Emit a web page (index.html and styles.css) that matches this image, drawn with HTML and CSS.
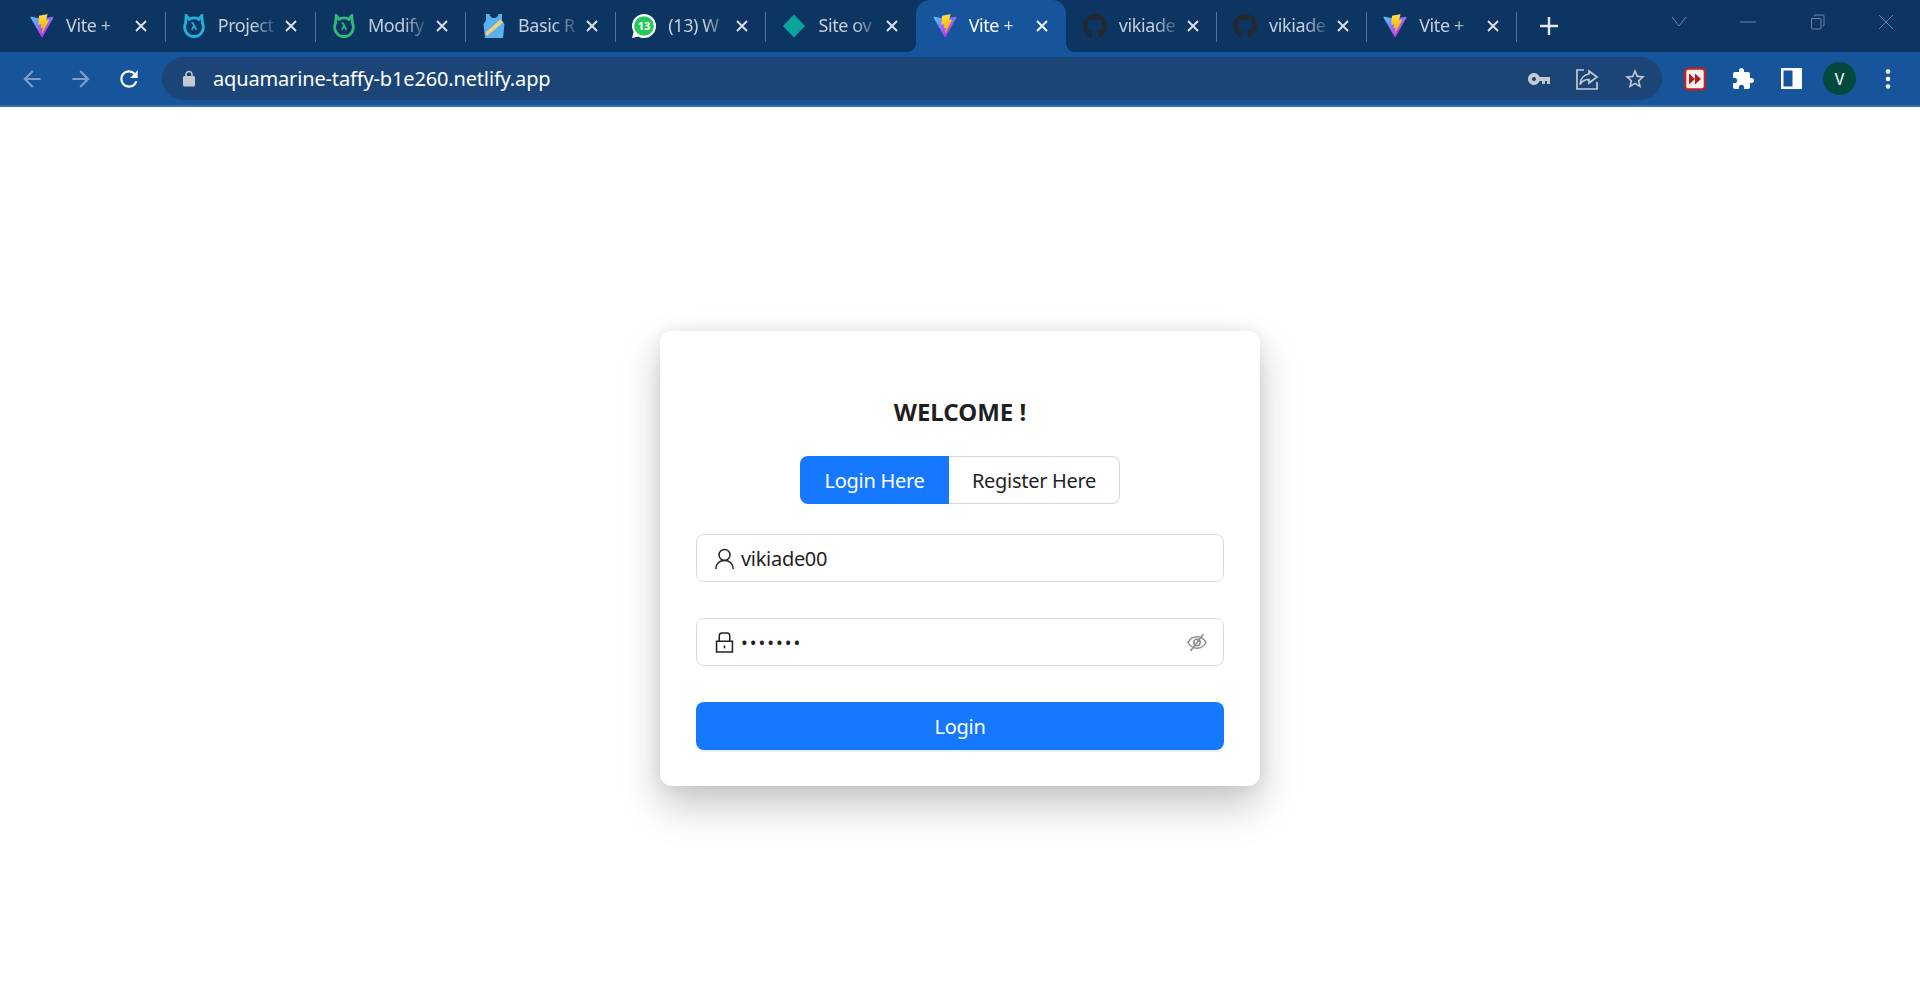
FILE: index.html
```html
<!DOCTYPE html>
<html lang="en">
<head>
    <meta charset="UTF-8">
    <title>Vite + React</title>
    <link rel="stylesheet" href="styles.css">
</head>
<body>
<svg class="defs" width="0" height="0">
    <defs>
        <linearGradient id="viteA" gradientUnits="userSpaceOnUse" x1="6" y1="33" x2="235" y2="344">
            <stop offset="0" stop-color="#41D1FF"/><stop offset="1" stop-color="#BD34FE"/>
        </linearGradient>
        <linearGradient id="viteB" gradientUnits="userSpaceOnUse" x1="194.6" y1="8.8" x2="236" y2="293">
            <stop offset="0" stop-color="#FFEA83"/><stop offset=".083" stop-color="#FFDD35"/><stop offset="1" stop-color="#FFA800"/>
        </linearGradient>
        <symbol id="vite" viewBox="0 0 410 404">
            <path fill="url(#viteA)" d="M399.641 59.5246L215.643 388.545C211.844 395.338 202.084 395.378 198.228 388.618L10.5817 59.5563C6.38087 52.1896 12.6802 43.2665 21.0281 44.7586L205.223 77.6824C206.398 77.8924 207.601 77.8904 208.776 77.6763L389.119 44.8058C397.439 43.2894 403.768 52.1434 399.641 59.5246Z"/>
            <path fill="url(#viteB)" d="M292.965 1.5744L156.801 28.2552C154.563 28.6937 152.906 30.5903 152.771 32.8664L144.395 174.33C144.198 177.662 147.258 180.248 150.51 179.498L188.42 170.749C191.967 169.931 195.172 173.055 194.443 176.622L183.18 231.775C182.422 235.487 185.907 238.661 189.532 237.56L212.947 230.446C216.577 229.344 220.065 232.527 219.297 236.242L201.398 322.875C200.278 328.294 207.486 331.249 210.492 326.603L212.5 323.5L323.454 102.072C325.312 98.3645 322.108 94.137 318.036 94.9228L279.014 102.454C275.347 103.161 272.227 99.746 273.262 96.1583L298.731 7.86689C299.767 4.27314 296.636 0.855181 292.965 1.5744Z"/>
        </symbol>
        <symbol id="github" viewBox="0 0 16 16">
            <path fill="#24292f" d="M8 0C3.58 0 0 3.58 0 8c0 3.54 2.29 6.53 5.47 7.59.4.07.55-.17.55-.38 0-.19-.01-.82-.01-1.49-2.01.37-2.53-.49-2.69-.94-.09-.23-.48-.94-.82-1.13-.28-.15-.68-.52-.01-.53.63-.01 1.08.58 1.23.82.72 1.21 1.87.87 2.33.66.07-.52.28-.87.51-1.07-1.78-.2-3.64-.89-3.64-3.95 0-.87.31-1.59.82-2.15-.08-.2-.36-1.02.08-2.12 0 0 .67-.21 2.2.82.64-.18 1.32-.27 2-.27.68 0 1.36.09 2 .27 1.53-1.04 2.2-.82 2.2-.82.44 1.1.16 1.92.08 2.12.51.56.82 1.27.82 2.15 0 3.07-1.87 3.75-3.65 3.95.29.25.54.73.54 1.48 0 1.07-.01 1.93-.01 2.2 0 .21.15.46.55.38A8.013 8.013 0 0016 8c0-4.42-3.58-8-8-8z"/>
        </symbol>
        <symbol id="cat" viewBox="0 0 24 24">
            <path fill="none" stroke="currentColor" stroke-width="2.8" d="M4.200 1.500l-.6 7.700a9.300 9.300 0 1 0 16.800 0l-.6-7.700-3 3.800a9.300 9.300 0 0 0-9.600 0z"/>
            <path fill="currentColor" d="M3 0l4 3.500-4 4zM21 0l-4 3.500 4 4z"/>
            <path fill="none" stroke="currentColor" stroke-width="1.700" d="M9.600 9.200h1.200l3.600 6.600M12 12.200l-2.400 3.600"/>
        </symbol>
        <symbol id="close" viewBox="0 0 12 12">
            <path stroke="currentColor" stroke-width="1.900" d="M1 1l10 10M11 1L1 11"/>
        </symbol>
    </defs>
</svg>

<div class="tabstrip">
    <div class="tab">
        <svg class="favicon"><use href="#vite"/></svg>
        <span class="tab-title">Vite +</span>
        <svg class="tab-close"><use href="#close"/></svg>
    </div>
    <div class="tab">
        <svg class="favicon cat-blue"><use href="#cat"/></svg>
        <span class="tab-title">Project</span>
        <svg class="tab-close"><use href="#close"/></svg>
    </div>
    <div class="tab">
        <svg class="favicon cat-green"><use href="#cat"/></svg>
        <span class="tab-title">Modify</span>
        <svg class="tab-close"><use href="#close"/></svg>
    </div>
    <div class="tab">
        <svg class="favicon" viewBox="0 0 24 24">
            <path fill="#5bb0ee" d="M4 0h3.500c.6 3 2.500 4 4.500 4s3.900-1 4.500-4H20v6.500l2.500 3.500-1.500 14H3L1.500 10 4 6.500z"/>
            <path fill="#f3cf7c" d="M18.500 5.500l2.500 3-16 13.500-2-3z"/>
        </svg>
        <span class="tab-title">Basic R</span>
        <svg class="tab-close"><use href="#close"/></svg>
    </div>
    <div class="tab">
        <svg class="favicon" viewBox="0 0 24 24">
            <path fill="#fff" d="M12 0a12 12 0 0 1 0 24c-2 0-4-.5-5.800-1.500L0 24l1.600-6C.6 16.200 0 14.100 0 12A12 12 0 0 1 12 0z"/>
            <circle cx="12" cy="12" r="9.800" fill="#25c95a"/>
            <text class="wa-count" x="12" y="16">13</text>
        </svg>
        <span class="tab-title">(13) W</span>
        <svg class="tab-close"><use href="#close"/></svg>
    </div>
    <div class="tab no-sep">
        <svg class="favicon" viewBox="0 0 24 24">
            <path fill="#0aa39d" d="M12 .5l11 11.500-11 11.500L1 12z"/>
        </svg>
        <span class="tab-title">Site ov</span>
        <svg class="tab-close"><use href="#close"/></svg>
    </div>
    <div class="tab active">
        <svg class="favicon"><use href="#vite"/></svg>
        <span class="tab-title">Vite +</span>
        <svg class="tab-close"><use href="#close"/></svg>
    </div>
    <div class="tab">
        <svg class="favicon"><use href="#github"/></svg>
        <span class="tab-title">vikiade</span>
        <svg class="tab-close"><use href="#close"/></svg>
    </div>
    <div class="tab">
        <svg class="favicon"><use href="#github"/></svg>
        <span class="tab-title">vikiade</span>
        <svg class="tab-close"><use href="#close"/></svg>
    </div>
    <div class="tab">
        <svg class="favicon"><use href="#vite"/></svg>
        <span class="tab-title">Vite +</span>
        <svg class="tab-close"><use href="#close"/></svg>
    </div>
    <svg class="new-tab" viewBox="0 0 18 18"><path stroke="#e3e8ee" stroke-width="2.400" d="M9 0v18M0 9h18"/></svg>
    <div class="window-btns">
        <svg class="win-btn" viewBox="0 0 16 16"><path fill="none" stroke="#6d86a5" d="M1 3l7 9 7-9"/></svg>
        <svg class="win-btn" viewBox="0 0 16 16"><path stroke="#6d86a5" d="M0 8h16"/></svg>
        <svg class="win-btn" viewBox="0 0 16 16"><path fill="none" stroke="#6d86a5" d="M2.500 4.500h8.500a1 1 0 0 1 1 1v8.500a1 1 0 0 1-1 1H3.500a1 1 0 0 1-1-1zM5 2.500V2a1 1 0 0 1 1-1h8a1 1 0 0 1 1 1v9a1 1 0 0 1-1 1h-.500"/></svg>
        <svg class="win-btn" viewBox="0 0 16 16"><path stroke="#6d86a5" d="M1 1l14 14M15 1L1 15"/></svg>
    </div>
</div>

<div class="toolbar">
    <svg class="tool-icon dim" viewBox="0 0 24 24"><path d="M20 11H7.830l5.590-5.590L12 4l-8 8 8 8 1.410-1.410L7.830 13H20v-2z"/></svg>
    <svg class="tool-icon dim" viewBox="0 0 24 24"><path d="M4 11h12.170l-5.590-5.590L12 4l8 8-8 8-1.410-1.410L16.170 13H4v-2z"/></svg>
    <svg class="tool-icon" viewBox="0 0 24 24"><path d="M17.650 6.350A7.950 7.950 0 0012 4c-4.420 0-7.990 3.580-7.990 8s3.570 8 7.990 8c3.730 0 6.840-2.550 7.730-6h-2.080A5.990 5.990 0 0112 18c-3.310 0-6-2.690-6-6s2.690-6 6-6c1.660 0 3.140.690 4.220 1.780L13 11h7V4l-2.350 2.350z"/></svg>
    <div class="omnibox">
        <svg class="lock-icon" viewBox="0 0 24 24"><path d="M18 8h-1V6c0-2.760-2.240-5-5-5S7 3.240 7 6v2H6c-1.100 0-2 .9-2 2v10c0 1.100.9 2 2 2h12c1.100 0 2-.9 2-2V10c0-1.100-.9-2-2-2zM9 6c0-1.660 1.340-3 3-3s3 1.340 3 3v2H9V6z"/></svg>
        <span class="url">aquamarine-taffy-b1e260.netlify.app</span>
        <svg class="omni-icon" viewBox="0 0 24 24"><path d="M12.650 10C11.830 7.670 9.610 6 7 6c-3.310 0-6 2.690-6 6s2.690 6 6 6c2.610 0 4.830-1.670 5.650-4H15v3h3v-3h2v3h3v-7H12.650zM7 14c-1.100 0-2-.9-2-2s.9-2 2-2 2 .9 2 2-.9 2-2 2z"/></svg>
        <svg class="omni-icon" viewBox="0 0 24 24"><path fill="none" stroke="currentColor" stroke-width="1.700" d="M9 3H2v19h20v-7M14 4l8 6-8 6v-3.500c-4 0-7 1.500-9 5 .5-6 4-10 9-10.500z"/></svg>
        <svg class="omni-icon" viewBox="0 0 24 24"><path d="M22 9.240l-7.190-.62L12 2 9.190 8.630 2 9.240l5.460 4.730L5.820 21 12 17.270 18.180 21l-1.630-7.030L22 9.240zM12 15.400l-3.760 2.270 1-4.280-3.320-2.880 4.380-.38L12 6.100l1.710 4.040 4.380.38-3.320 2.880 1 4.280L12 15.400z"/></svg>
    </div>
    <div class="ext-btns">
        <svg class="ext-icon" viewBox="0 0 24 24">
            <rect x="2" y="1.500" width="20" height="21" rx="3" fill="#fbeeee" stroke="#b3262a" stroke-width="2.600"/>
            <path fill="#a81e22" d="M6 6.500l6 5.500-6 5.500zM12 6.500l6 5.500-6 5.500z"/>
        </svg>
        <svg class="ext-icon" viewBox="0 0 24 24"><path fill="#fff" d="M20.500 11H19V7c0-1.100-.9-2-2-2h-4V3.500C13 2.120 11.880 1 10.500 1S8 2.120 8 3.500V5H4c-1.100 0-1.990.9-1.990 2v3.800H3.500c1.490 0 2.700 1.210 2.700 2.700s-1.210 2.700-2.700 2.700H2V20c0 1.100.9 2 2 2h3.800v-1.500c0-1.490 1.210-2.700 2.700-2.700 1.490 0 2.700 1.210 2.700 2.700V22H17c1.100 0 2-.9 2-2v-4h1.500c1.380 0 2.500-1.120 2.500-2.500S21.880 11 20.500 11z"/></svg>
        <svg class="ext-icon" viewBox="0 0 24 24"><path fill="#fff" fill-rule="evenodd" d="M2 1h21v21H2zM4.500 3.500v16h9v-16z"/></svg>
        <div class="avatar">V</div>
        <svg class="ext-icon" viewBox="0 0 24 24"><g fill="#fff"><circle cx="12" cy="4.500" r="2.300"/><circle cx="12" cy="12" r="2.300"/><circle cx="12" cy="19.500" r="2.300"/></g></svg>
    </div>
</div>

<div class="page">
    <div class="card">
        <h1 class="card-title">WELCOME !</h1>
        <div class="segment">
            <div class="segment-btn selected">Login Here</div>
            <div class="segment-btn">Register Here</div>
        </div>
        <div class="field">
            <svg class="field-icon" viewBox="0 0 18 18"><path fill="none" stroke="#222" stroke-width="1.300" d="M9 1.200a4.700 4.700 0 1 0 0 9.400 4.700 4.700 0 0 0 0-9.400zM1.500 18c0-4.500 3.300-7.400 7.500-7.400s7.500 2.900 7.500 7.400"/></svg>
            <span class="field-text">vikiade00</span>
        </div>
        <div class="field">
            <svg class="field-icon" viewBox="0 0 18 18"><path fill="none" stroke="#222" stroke-width="1.300" d="M2.200 8h13.600v9.200H2.200zM4.500 8V3.200A2.400 2.400 0 0 1 6.900.900h4.200a2.400 2.400 0 0 1 2.400 2.300V8"/><path stroke="#222" stroke-width="1.300" d="M9 11.500v2.500"/></svg>
            <span class="field-text dots">•••••••</span>
            <svg class="eye-icon" viewBox="0 0 20 20"><path fill="none" stroke="#8c8c8c" stroke-width="1.500" d="M1 10.500c2-3.800 5-5.700 9-5.700s7 1.900 9 5.700c-2 3.800-5 5.700-9 5.700s-7-1.900-9-5.700zM10 7.300a3.200 3.200 0 1 0 0 6.400 3.200 3.200 0 0 0 0-6.400zM16.500 2L3.500 19"/></svg>
        </div>
        <div class="submit">Login</div>
    </div>
</div>
</body>
</html>
```

FILE: styles.css
```css
* {
    padding: 0;
    margin: 0;
    box-sizing: border-box;
}

html, body {
    height: 100%;
}

body {
    display: flex;
    flex-direction: column;
    overflow: hidden;
    background: #fff;
    font-family: "Noto Sans", "Open Sans", sans-serif;
}

.defs {
    position: absolute;
}

/* tabs */
.tabstrip {
    display: flex;
    align-items: center;
    height: 52px;
    padding-left: 14.500px;
    background: #0d3562;
}

.tab {
    display: flex;
    flex: none;
    align-items: center;
    position: relative;
    width: 150.200px;
    height: 52px;
    padding: 0 17.500px 0 17px;
    color: #c3cfdd;
}

.tab:first-child {
    padding-left: 15.500px;
}

.tab::after {
    content: "";
    position: absolute;
    right: -1px;
    top: 12px;
    height: 30px;
    width: 1px;
    background: #54739a;
}

.tab.no-sep::after,
.tab.active::after {
    display: none;
}

.tab.active {
    background: #16559b;
    border-radius: 14px 14px 0 0;
    color: #fff;
}

/* little curves at the foot of the active tab */
.tab.active::before {
    content: "";
    position: absolute;
    left: -8px;
    right: -8px;
    bottom: 0;
    height: 8px;
    background:
        radial-gradient(circle at 0 0, transparent 7.500px, #16559b 8px) left top / 8px 8px no-repeat,
        radial-gradient(circle at 100% 0, transparent 7.500px, #16559b 8px) right top / 8px 8px no-repeat;
}

.favicon {
    flex: none;
    width: 24px;
    height: 24px;
}

.cat-blue {
    color: #1fb4dc;
}

.cat-green {
    color: #2fbb78;
}

.wa-count {
    font-size: 11px;
    font-weight: 700;
    fill: #fff;
    text-anchor: middle;
}

.tab-title {
    flex: 1;
    margin: 0 8px 2px 12px;
    white-space: nowrap;
    font-size: 18px;
    letter-spacing: -0.4px;
    -webkit-mask-image: linear-gradient(to right, #000 60%, rgba(0, 0, 0, 0.1));
    mask-image: linear-gradient(to right, #000 60%, rgba(0, 0, 0, 0.1));
}

.tab-close {
    flex: none;
    width: 12px;
    height: 12px;
    color: #dbe2ea;
}

.active .tab-close {
    color: #fff;
}

.new-tab {
    width: 18px;
    height: 18px;
    margin-left: 24px;
}

.window-btns {
    display: flex;
    gap: 53px;
    align-self: flex-start;
    margin: 14px 0 0 auto;
    padding-right: 26px;
}

.win-btn {
    width: 16px;
    height: 16px;
}

/* toolbar */
.toolbar {
    display: flex;
    align-items: center;
    height: 55px;
    padding: 0 0 0 19px;
    background: #16559b;
    border-bottom: 2px solid #3a6ca8;
}

.tool-icon {
    flex: none;
    width: 26px;
    height: 26px;
    margin-right: 22px;
    fill: #fff;
}

.tool-icon.dim {
    margin-right: 22.500px;
    fill: #7f9dc3;
}

.omnibox {
    display: flex;
    align-items: center;
    width: 1500px;
    height: 43px;
    margin-left: -2px;
    padding: 0 15px 0 18px;
    background: #1a4576;
    border-radius: 22px;
    color: #c3c9d1;
}

.lock-icon {
    width: 18px;
    height: 18px;
    fill: #c3c9d1;
}

.url {
    flex: 1;
    margin-left: 15px;
    font-size: 20px;
    letter-spacing: -0.15px;
    color: #fff;
}

.omni-icon {
    width: 24px;
    height: 24px;
    margin-left: 24px;
    fill: currentColor;
}

.ext-btns {
    display: flex;
    align-items: center;
    gap: 24px;
    margin-left: 21px;
}

.ext-icon {
    width: 24px;
    height: 24px;
}

.avatar {
    display: flex;
    align-items: center;
    justify-content: center;
    width: 33px;
    height: 33px;
    margin: 0 -4px;
    border-radius: 50%;
    background: #024a3e;
    color: #fff;
    font-size: 16px;
}

/* login page */
.page {
    flex: 1;
    display: flex;
    align-items: center;
    justify-content: center;
    padding-top: 4px;
}

.card {
    display: flex;
    flex-direction: column;
    width: 600px;
    padding: 36px;
    background: #fff;
    border-radius: 12px;
    box-shadow: 0 20px 40px rgba(0, 0, 0, 0.22), 0 0 16px rgba(0, 0, 0, 0.08);
    color: #1f1f1f;
}

.card-title {
    margin: 29px 0 28px;
    text-align: center;
    font-size: 24px;
    line-height: 32px;
    font-weight: 700;
}

.segment {
    display: flex;
    align-self: center;
    height: 48px;
    margin-bottom: 30px;
    font-size: 20px;
    letter-spacing: -0.3px;
}

.segment-btn {
    display: flex;
    align-items: center;
    justify-content: center;
    width: 171px;
    border: 1px solid #d9d9d9;
    border-radius: 0 8px 8px 0;
    border-left: 0;
}

.segment-btn.selected {
    width: 149px;
    background: #1677ff;
    border: 0;
    border-radius: 8px 0 0 8px;
    color: #fff;
}

.field {
    display: flex;
    align-items: center;
    height: 48px;
    margin-bottom: 36px;
    padding: 0 16px 0 16.500px;
    border: 1px solid #d9d9d9;
    border-radius: 8px;
    font-size: 20px;
    letter-spacing: -0.3px;
}

.field-icon {
    flex: none;
    width: 21px;
    height: 21px;
    margin-right: 6.500px;
}

.field-text {
    flex: 1;
}

.dots {
    letter-spacing: 2px;
    font-size: 18px;
}

.eye-icon {
    width: 20px;
    height: 20px;
}

.submit {
    display: flex;
    align-items: center;
    justify-content: center;
    height: 48px;
    background: #1677ff;
    border-radius: 8px;
    color: #fff;
    font-size: 20px;
    letter-spacing: -0.3px;
    box-shadow: 0 2px 0 rgba(5, 145, 255, 0.1);
}
```
